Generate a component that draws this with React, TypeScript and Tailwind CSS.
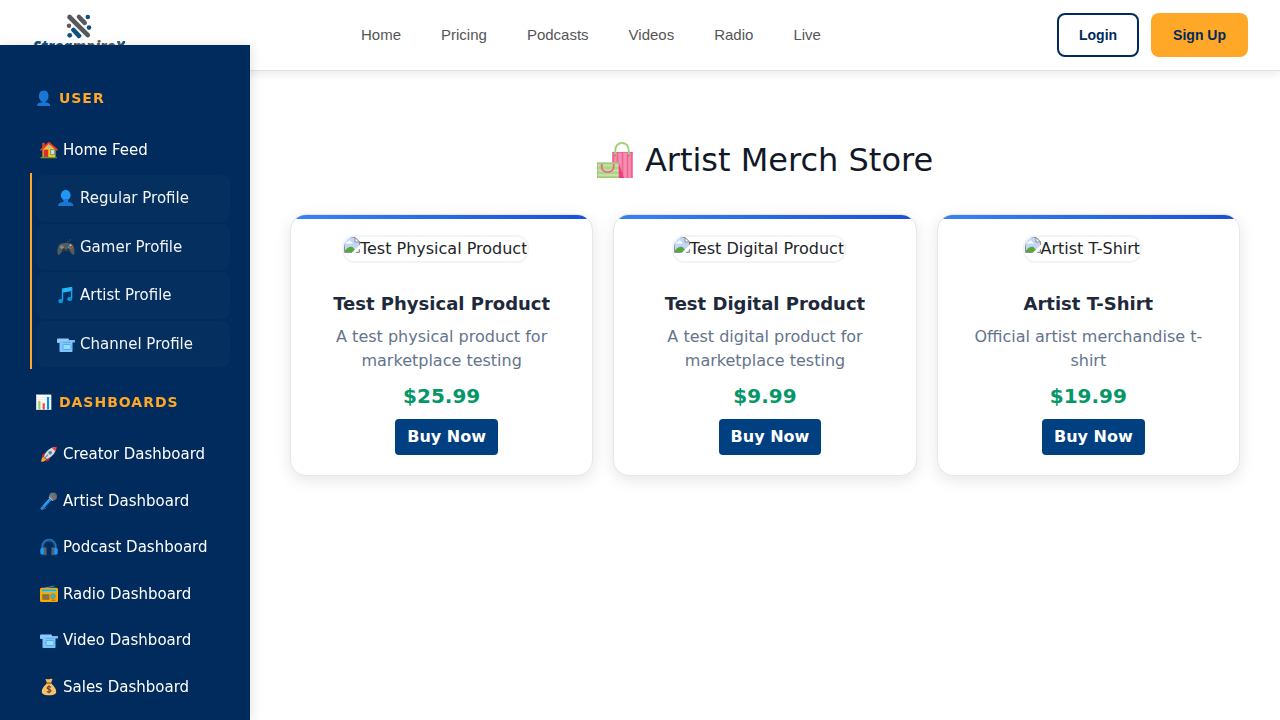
import React from "react";

const NAV = ["Home", "Pricing", "Podcasts", "Videos", "Radio", "Live"];

type IconName =
  | "house" | "bust" | "gamepad" | "notes" | "camera"
  | "rocket" | "mic" | "headphones" | "radio" | "money";

const PROFILES: { icon: IconName; label: string }[] = [
  { icon: "bust", label: "Regular Profile" },
  { icon: "gamepad", label: "Gamer Profile" },
  { icon: "notes", label: "Artist Profile" },
  { icon: "camera", label: "Channel Profile" },
];

const DASHBOARDS: { icon: IconName; label: string }[] = [
  { icon: "rocket", label: "Creator Dashboard" },
  { icon: "mic", label: "Artist Dashboard" },
  { icon: "headphones", label: "Podcast Dashboard" },
  { icon: "radio", label: "Radio Dashboard" },
  { icon: "camera", label: "Video Dashboard" },
  { icon: "money", label: "Sales Dashboard" },
];

const PRODUCTS = [
  { name: "Test Physical Product", text: "A test physical product for marketplace testing", price: "$25.99" },
  { name: "Test Digital Product", text: "A test digital product for marketplace testing", price: "$9.99" },
  { name: "Artist T-Shirt", text: "Official artist merchandise t-shirt", price: "$19.99" },
];

const ICONS: Record<IconName, React.ReactNode> = {
  house: (
    <>
      <path d="M2.200 1.800h2.600v5H2.200Z" fill="#d9442b" />
      <path d="M2.500 8 8.800 2.500 15.500 8V16.400H2.500Z" fill="#fcc21b" />
      <path d="M3.600 8.600h4.600v7.800H3.600Z" fill="#db2c33" />
      <path d="M10.600 8.600h4v5h-4Z" fill="#b9e4ea" stroke="#2f7889" strokeWidth=".6" />
      <circle cx="8.900" cy="6" r="1.500" fill="#84c7e0" />
      <path d="M1 8.800 8.800 1.800 16.800 8.800" fill="none" stroke="#ed3b2b" strokeWidth="1.800" strokeLinecap="round" strokeLinejoin="round" />
      <path d="M.500 16h4c1-1 2-.4 2.500.2h4.500c1-.8 2-.6 2.500 0h3v1H.500Z" fill="#689f38" />
    </>
  ),
  bust: (
    <>
      <ellipse cx="8.700" cy="6.200" rx="4.900" ry="5.400" fill="#2196f3" />
      <path d="M6.500 10h4.500v4h-4.500Z" fill="#1a7bdc" />
      <path d="M1 17c.2-2.800 2.300-3.600 5.500-3.900h4.500c3.200.3 5.300 1.100 5.500 3.900Z" fill="#1976d2" />
    </>
  ),
  gamepad: (
    <>
      <path d="M9 6.500C7.800 3.500 13 4.500 13.500 1" fill="none" stroke="#4a5157" strokeWidth=".9" />
      <path d="M3.500 5.800C6 4.800 12 4.800 14.500 5.800 16.800 7 17.900 12 17.500 15.200c-.3 2-2.200 2-3.200.4L12.800 13H5.200L3.700 15.600c-1 1.600-2.900 1.600-3.200-.4C.1 12 1.200 7 3.500 5.800Z" fill="#555a5e" />
      <path d="M4.900 7.200v4M2.900 9.200h4" stroke="#8d9397" strokeWidth="1.200" />
      <circle cx="6.900" cy="12.200" r="1.700" fill="#2f3437" />
      <circle cx="11.200" cy="12.200" r="1.700" fill="#2f3437" />
      <circle cx="13.500" cy="7.200" r="1" fill="#fbc02d" />
      <circle cx="11.800" cy="8.900" r="1" fill="#1e9be8" />
      <circle cx="15.300" cy="8.900" r="1" fill="#e53935" />
      <circle cx="13.500" cy="10.500" r="1" fill="#43a047" />
    </>
  ),
  notes: (
    <>
      <path d="M5 2.400 15.200.800v4.300L5 6.700Z" fill="#29b6f6" />
      <path d="M5.500 3v11.800M14.600 2v10.800" stroke="#1ba5f2" strokeWidth="1.400" />
      <ellipse cx="3.700" cy="15" rx="2.500" ry="1.900" fill="#039be5" />
      <ellipse cx="12.700" cy="13" rx="2.500" ry="1.900" fill="#039be5" />
    </>
  ),
  camera: (
    <>
      <rect x="0" y="3.500" width="12" height="4.500" rx="1" fill="#90caf9" />
      <path d="M11 5h7v2.500h-4Z" fill="#74b9f5" />
      <rect x="2.500" y="6" width="13" height="11" rx=".8" fill="#82c3fa" />
      <rect x="6" y="9.500" width="8" height="5" rx=".8" fill="#8ee0ff" stroke="#4b9fe8" strokeWidth=".8" />
      <path d="M6 7.500h8" stroke="#5fabed" strokeWidth=".9" />
    </>
  ),
  rocket: (
    <>
      <path d="M5 8 2.200 9.500 2 12l3.500-1ZM10 13l-1.500 2.900-2.500.5 1-3.900Z" fill="#c62828" />
      <path d="M3.500 11.500C1.800 12.500 1.200 15 1.200 16.800c2 0 4.200-.7 5.200-2.300Z" fill="#ffa726" />
      <path d="M4 11.500C5 7 9.500 2.700 14.300 2.200L15.900 3.800C15.300 8.500 11.500 12.500 6.500 14Z" fill="#d5dfe3" />
      <path d="M12 3c1.500-.9 3-1.300 4.600-1.200.1 1.600-.3 3.200-1.200 4.600Z" fill="#f44336" />
      <circle cx="10.200" cy="7.700" r="1.700" fill="#4a7f99" stroke="#90a4ae" strokeWidth=".6" />
      <path d="M4 13.800 8 9.800" stroke="#78909c" strokeWidth="1.300" />
    </>
  ),
  mic: (
    <>
      <path d="M2 16.500 10.500 7" stroke="#1e88e5" strokeWidth="3" strokeLinecap="round" />
      <path d="M3.200 14.200 9.500 7.100" stroke="#4fb3f7" strokeWidth=".9" />
      <circle cx="13" cy="4.500" r="4" fill="#626b70" />
      <path d="M10 3.300 14.300 7.600M11.500 2 15.800 6.300" stroke="#98a2a6" strokeWidth=".6" />
      <path d="M9 4.800 12.800 8.600" stroke="#b0bec5" strokeWidth="1.200" />
      <path d="M1 16.500c2 1 3-1 5 .4" fill="none" stroke="#546e7a" strokeWidth=".8" />
    </>
  ),
  headphones: (
    <>
      <path d="M2.200 12V8.800C2.200 4.500 5.200 1.600 9 1.600s6.800 2.900 6.800 7.200V12" fill="none" stroke="#1976c5" strokeWidth="1.700" />
      <path d="M3.700 11V8.800C3.700 5.300 6 3.100 9 3.100s5.300 2.200 5.300 5.700V11" fill="none" stroke="#455a64" strokeWidth=".8" />
      <rect x=".300" y="9.800" width="4.200" height="7" rx="2" fill="#2196f3" />
      <rect x="13.500" y="9.800" width="4.200" height="7" rx="2" fill="#2196f3" />
      <rect x="3.800" y="9.300" width="2.800" height="8" rx=".8" fill="#546269" />
      <rect x="11.400" y="9.300" width="2.800" height="8" rx=".8" fill="#546269" />
    </>
  ),
  radio: (
    <>
      <path d="M5 3 14.500.900" stroke="#78909c" strokeWidth=".8" />
      <rect x="0" y="2.700" width="18" height="14.300" rx="1.500" fill="#ffa800" />
      <rect x="1.800" y="4.300" width="14.400" height="3" rx=".4" fill="#4dd0e1" />
      <path d="M2 5.200h14" stroke="#2384a5" strokeWidth=".7" />
      <path d="M2.200 9.300h7.300v5.500H2.200Z" fill="#a07428" />
      <path d="M4 9.300v5.500M6 9.300v5.500M8 9.300v5.500" stroke="#546e7a" strokeWidth=".8" />
      <circle cx="13" cy="11.200" r="2.500" fill="#29b6e8" stroke="#b87a13" strokeWidth=".6" />
      <path d="M11.300 15.200h4.200" stroke="#9c6514" strokeWidth="1" />
    </>
  ),
  money: (
    <>
      <path d="M5.500 1.200c1.500-.6 2.500.6 3.500 0s2.500-.7 3.500 0L11 5H7Z" fill="#f5bc62" />
      <path d="M7 5h4c2 2.500 5.200 5 5.200 8.500 0 2.600-2 3.700-7.200 3.700s-7.200-1.100-7.200-3.700C1.800 10 5 7.500 7 5Z" fill="#fbc16a" />
      <path d="M6.500 5.200h5" stroke="#8d5b2c" strokeWidth="1.200" strokeLinecap="round" />
      <path d="M11 9.300C9.800 8 7 8.400 7.100 9.900c.1 1.700 3.900 1 3.900 2.900 0 1.600-2.900 1.900-4.100.5M9 7.300v8" fill="none" stroke="#60432c" strokeWidth="1.100" />
    </>
  ),
};

function Icon({ name }: { name: IconName }) {
  return (
    <svg width="18" height="18" viewBox="0 0 18 18" fill="none" className="shrink-0" aria-hidden="true">
      {ICONS[name]}
    </svg>
  );
}

function ShoppingBags() {
  return (
    <svg width="36" height="36" viewBox="0 0 36 36" fill="none" aria-hidden="true">
      <path d="M15 10h21v26H15Z" fill="#f48fb1" />
      <path d="M16.500 10v26M20.500 10v26M25.500 10v26M30.500 10v26M34.500 10v26" stroke="#f06292" strokeWidth="1.600" />
      <path d="M21.500 20 27 36h-5.500Z" fill="#ec407a" />
      <path d="M15 10.400h21" stroke="#ec5f91" strokeWidth=".8" />
      <path d="M18.300 13.500V8.500c0-4.700 2.800-7.500 6.700-7.500s6.700 2.800 6.700 7.500v5" stroke="#a3d17a" strokeWidth="1.900" />
      <path d="M17.500 13.300h1.600M31 13.300h1.600" stroke="#558b4f" strokeWidth="1" />
      <path d="M0 20.500h21.500V36H0Z" fill="#aed581" />
      <path d="M0 23.500h21.500M0 28.500h21.500M0 33h21.500" stroke="#c5e1a5" strokeWidth="1.800" />
      <path d="M0 21h21.500M.400 20.500V36M0 35.600h21.500" stroke="#9bbf78" strokeWidth=".8" />
      <path d="M4.700 22v2.500c0 3.600 2.600 5.700 6 5.700s6-2.100 6-5.700V22" stroke="#f06292" strokeWidth="1.800" />
    </svg>
  );
}

function Logo() {
  return (
    <a href="#" className="flex w-[94px] flex-col items-center">
      <svg width="26" height="26" viewBox="0 0 26 26" fill="none" strokeLinecap="round" aria-hidden="true">
        <g stroke="#58595b" strokeWidth="4.600">
          <path d="M3.500 4 21.800 22.200" />
          <path d="M13 4 18.700 9.900" />
        </g>
        <path d="M7.500 17 13 22.800" stroke="#11517f" strokeWidth="4.600" />
        <circle cx="3" cy="12.700" r="2.200" fill="#58595b" />
        <circle cx="21.800" cy="4" r="2.300" fill="#11517f" />
        <circle cx="23" cy="14.600" r="2.300" fill="#11517f" />
        <circle cx="3.700" cy="22.300" r="2.400" fill="#11517f" />
      </svg>
      <span className="font-['Open_Sans',sans-serif] text-[15px] leading-[14px] font-extrabold text-[#11517f] italic">
        Strea<span className="text-[#58595b]">mpire</span>
        <span className="bg-linear-to-r from-[#58595b] from-50% to-[#11517f] to-50% bg-clip-text text-transparent">X</span>
      </span>
    </a>
  );
}

function BrokenImage() {
  return (
    <svg width="16" height="16" viewBox="0 0 16 16" className="shrink-0" aria-hidden="true">
      <path d="M0.500 0.500H11L15.500 5V15.500H0.500Z" fill="#c3d6f7" stroke="#8e8e8e" />
      <path d="M2 6.500c0-1.400 1-2 2-1.800C4.500 3.200 6.700 3.200 7 4.800c1.200 0 1.600.8 1.500 1.700Z" fill="#fff" />
      <path d="M1 15V13.500C3 10.500 6 9 8.500 10L13 15Z" fill="#55a83a" />
      <path d="M11 .5V5h4.500Z" fill="#fff" stroke="#8e8e8e" />
      <path d="M16 7.500 7.500 16H11.500L16 11.500Z" fill="#fff" />
    </svg>
  );
}

function SideHeading({ icon, children }: { icon: string; children: string }) {
  return (
    <h3 className="px-[5px] text-sm leading-[21px] font-bold tracking-[1px] text-[#ffa726] uppercase">
      {icon} {children}
    </h3>
  );
}

function SideLink({ icon, label }: { icon: IconName; label: string }) {
  return (
    <a href="#" className="flex items-center gap-[5px] py-3 pl-2.5 text-[15px] leading-normal text-white">
      <Icon name={icon} />
      <span>{label}</span>
    </a>
  );
}

export default function App() {
  return (
    <div className="min-h-screen bg-white font-['DejaVu_Sans',sans-serif] text-[#212529]">
      <header className="flex items-center justify-between border-b border-[#dee2e6] bg-white px-8 py-[13px] font-['Liberation_Sans',sans-serif] shadow-[0_2px_10px_rgba(0,0,0,0.1)]">
        <div className="flex items-center">
          <div className="h-11">
            <Logo />
          </div>
          <nav className="ml-[235px] flex gap-10 text-[15px] text-[#555555]">
            {NAV.map((item) => (
              <a key={item} href="#">{item}</a>
            ))}
          </nav>
        </div>
        <div className="flex gap-3 text-sm font-bold text-[#002b5c]">
          <button type="button" className="h-11 rounded-lg border-2 border-[#002b5c] px-5">Login</button>
          <button type="button" className="h-11 rounded-lg bg-[#ffa726] px-[22px]">Sign Up</button>
        </div>
      </header>

      <aside className="fixed top-[45px] bottom-0 left-0 w-[250px] overflow-hidden bg-[#002b5c] pt-[43px] pr-5 pl-[30px] shadow-[2px_0_10px_rgba(0,0,0,0.1)]">
        <SideHeading icon="👤">User</SideHeading>
        <div className="mt-[18px] h-[46px]">
          <SideLink icon="house" label="Home Feed" />
        </div>
        <ul className="flex flex-col gap-0.5 border-l-2 border-[#ffa726] py-0.5 pl-[5px]">
          {PROFILES.map((p) => (
            <li key={p.label}>
              <a
                href="#"
                className="flex items-center gap-[5px] rounded-lg bg-white/2 py-3 pl-5 text-[15px] leading-normal text-white/95"
              >
                <Icon name={p.icon} />
                <span>{p.label}</span>
              </a>
            </li>
          ))}
        </ul>
        <div className="mt-[23px]">
          <SideHeading icon="📊">Dashboards</SideHeading>
        </div>
        <ul className="mt-[18px]">
          {DASHBOARDS.map((d) => (
            <li key={d.label}>
              <SideLink icon={d.icon} label={d.label} />
            </li>
          ))}
        </ul>
      </aside>

      <main className="ml-[250px] px-10 pt-[65px]">
        <h1 className="flex items-center justify-center gap-3 text-[32px] leading-[48px] text-[#111827]">
          <ShoppingBags />
          <span>Artist Merch Store</span>
        </h1>
        <div className="mt-[30px] grid grid-cols-3 gap-5">
          {PRODUCTS.map((p) => (
            <article
              key={p.name}
              className="overflow-hidden rounded-2xl border border-[#e2e8f0] bg-white text-center shadow-[0_4px_16px_rgba(0,0,0,0.1)]"
            >
              <div className="h-1 bg-linear-to-r from-[#3b82f6] to-[#1d4ed8]" />
              <div className="flex flex-col items-center px-5 pt-4 pb-5">
                <div role="img" aria-label={p.name} className="mr-3 flex overflow-hidden rounded-xl border-2 border-[#f1f5f9]">
                  <BrokenImage />
                  <span className="leading-6">{p.name}</span>
                </div>
                <h2 className="mt-[27px] text-lg leading-[27px] font-bold text-[#1e293b]">{p.name}</h2>
                <p className="mt-2 leading-6 text-[#64748b]">{p.text}</p>
                <p className="mt-2 text-xl leading-[30px] font-bold text-[#059669]">{p.price}</p>
                <button type="button" className="mt-2 ml-2.5 h-9 rounded bg-[#004080] px-3 font-bold text-white">
                  Buy Now
                </button>
              </div>
            </article>
          ))}
        </div>
      </main>
    </div>
  );
}
